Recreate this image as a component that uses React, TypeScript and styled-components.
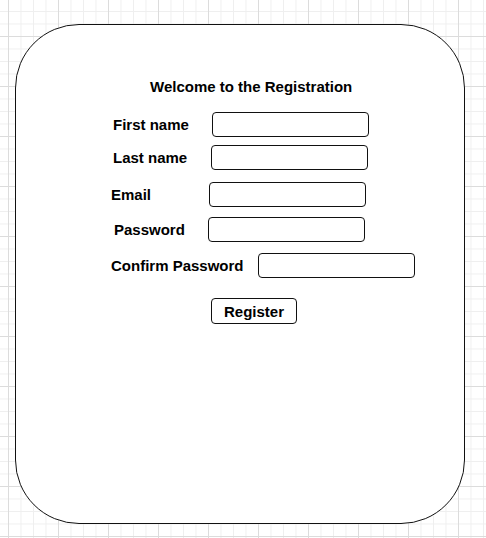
import React from "react";
import styled, { createGlobalStyle } from "styled-components";

const GlobalStyle = createGlobalStyle`
  html, body {
    margin: 0;
    padding: 0;
  }
  body {
    width: 486px;
    height: 538px;
    overflow: hidden;
    font-family: "Liberation Sans", Arial, sans-serif;
    color: #000;
    background-color: #fff;
    background-image:
      linear-gradient(to right, #dcdcdc 1px, transparent 1px),
      linear-gradient(to bottom, #dcdcdc 1px, transparent 1px),
      linear-gradient(to right, #efefef 1px, transparent 1px),
      linear-gradient(to bottom, #efefef 1px, transparent 1px);
    background-size: 50px 50px, 50px 50px, 12.5px 12.5px, 12.5px 12.5px;
    background-position: 8px 36px, 8px 36px, 8px 11px, 8px 11px;
  }
`;

const Page = styled.div`
  padding: 24px 0 0 15px;
`;

const Card = styled.div`
  box-sizing: border-box;
  width: 450px;
  height: 500px;
  border: 1.5px solid #111;
  border-radius: 64px;
  background: #fff;
  padding-top: 53px;
`;

const Title = styled.h1`
  margin: 0 0 16px 134px;
  font-size: 15px;
  line-height: 18px;
  font-weight: bold;
`;

const Form = styled.form`
  display: flex;
  flex-direction: column;
`;

const Row = styled.div<{ $left: number; $labelWidth: number; $top: number }>`
  display: flex;
  align-items: center;
  height: 25px;
  margin-top: ${(p) => p.$top}px;
  padding-left: ${(p) => p.$left}px;

  label {
    width: ${(p) => p.$labelWidth}px;
  }
`;

const Label = styled.label`
  flex: none;
  font-size: 15px;
  font-weight: bold;
  line-height: 18px;
`;

const Input = styled.input`
  box-sizing: border-box;
  width: 157px;
  height: 25px;
  margin: 0;
  padding: 0 6px;
  border: 1.5px solid #111;
  border-radius: 4px;
  background: #fff;
  font: inherit;
  outline: none;
`;

const ButtonRow = styled.div`
  display: flex;
  margin-top: 20px;
  padding-left: 195px;
`;

const Button = styled.button`
  box-sizing: border-box;
  width: 86px;
  height: 26px;
  margin: 0;
  padding: 0;
  border: 1.5px solid #111;
  border-radius: 4px;
  background: #fff;
  font-family: inherit;
  font-size: 15px;
  font-weight: bold;
  color: #000;
`;

const fields = [
  { label: "First name", left: 97, labelWidth: 99, top: 0 },
  { label: "Last name", left: 97, labelWidth: 98, top: 8 },
  { label: "Email", left: 95, labelWidth: 98, top: 12 },
  { label: "Password", left: 98, labelWidth: 94, top: 10 },
  { label: "Confirm Password", left: 95, labelWidth: 147, top: 11 },
];

export default function App() {
  return (
    <>
      <GlobalStyle />
      <Page>
        <Card>
          <Title>Welcome to the Registration</Title>
          <Form onSubmit={(e) => e.preventDefault()}>
            {fields.map((f) => (
              <Row key={f.label} $left={f.left} $labelWidth={f.labelWidth} $top={f.top}>
                <Label>{f.label}</Label>
                <Input type={f.label.includes("Password") ? "password" : "text"} />
              </Row>
            ))}
            <ButtonRow>
              <Button type="submit">Register</Button>
            </ButtonRow>
          </Form>
        </Card>
      </Page>
    </>
  );
}
